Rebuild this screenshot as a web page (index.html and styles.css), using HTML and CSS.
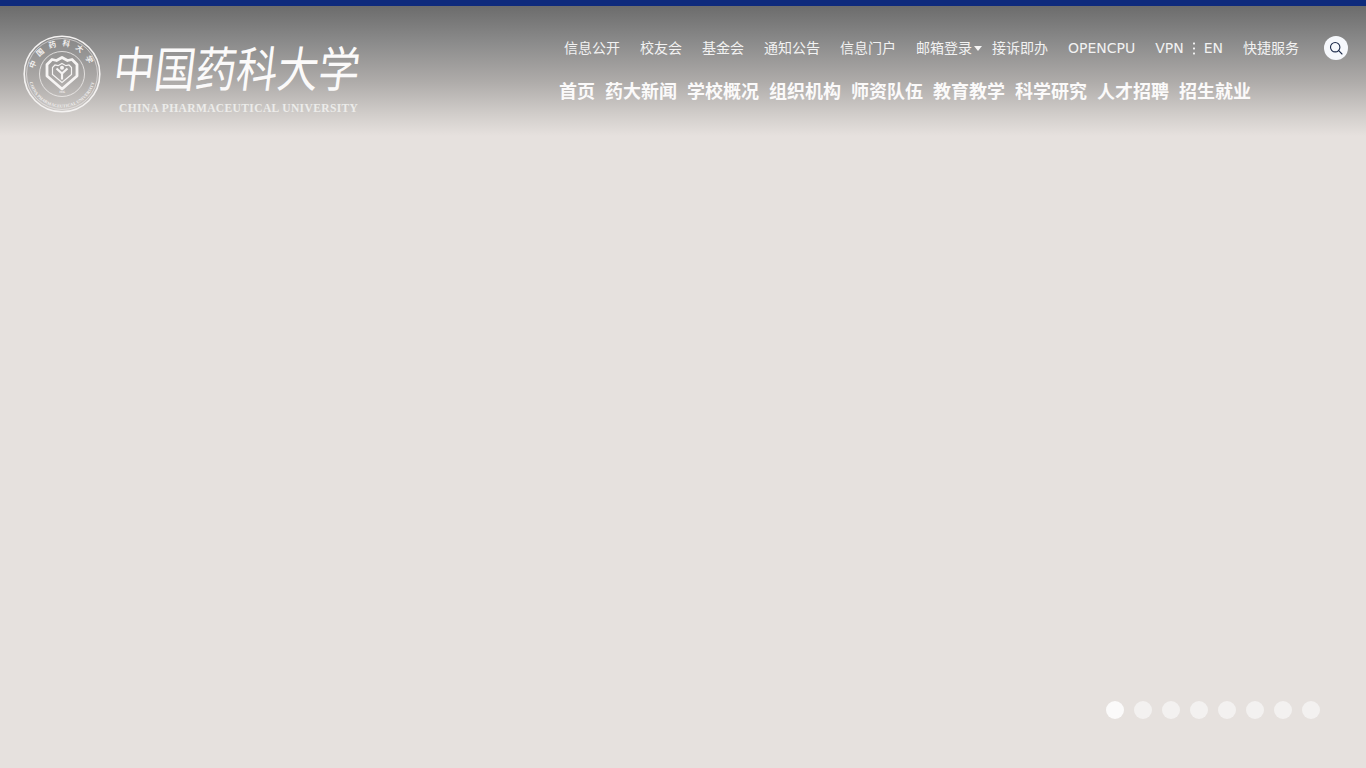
FILE: index.html
```html
<!DOCTYPE html>
<html lang="zh-CN">
<head>
<meta charset="utf-8">
<title>中国药科大学</title>
<link rel="stylesheet" href="styles.css">
</head>
<body>
<div class="accent"></div>
<main class="banner">
  <header class="header">
    <a class="logo" href="#">
      <svg class="seal" width="78" height="78" viewBox="0 0 78 78" fill="none">
        <defs>
          <path id="arcTop" d="M11 39a28 28 0 0 1 56 0"/>
          <path id="arcBottom" d="M5.500 39a33.500 33.500 0 0 0 67 0"/>
          <path id="arcYear" d="M20 39a19 19 0 0 0 38 0"/>
        </defs>
        <circle cx="39" cy="39" r="37.800" stroke="#f4f2f1" stroke-width="1.600"/>
        <circle cx="39" cy="39" r="35.500" stroke="#f1efee" stroke-width=".6"/>
        <circle cx="39" cy="39" r="22.500" stroke="#f1efee" stroke-width=".8"/>
        <text class="seal-cn"><textPath href="#arcTop" startOffset="50%" text-anchor="middle">中国药科大学</textPath></text>
        <text class="seal-en"><textPath href="#arcBottom" startOffset="50%" text-anchor="middle">CHINA PHARMACEUTICAL UNIVERSITY</textPath></text>
        <text class="seal-year"><textPath href="#arcYear" startOffset="50%" text-anchor="middle">1936</textPath></text>
        <path d="M39 22.500l5.500 3 4.500-1 5 5v11.500L39 54 24 41V29.500l5-5 4.500 1z" stroke="#f6f4f3" stroke-width="2.800" stroke-linejoin="round"/>
        <path d="M39 28.500l4 2.200 3-.7 2.500 2.500v7L39 47.500l-9.500-8v-7l2.500-2.500 3 .7z" stroke="#f6f4f3" stroke-width="1.200"/>
        <circle cx="39" cy="32.800" r="2" fill="#f6f4f3"/>
        <path d="M33.500 33.500L39 38.500l5.500-5M39 38.500v6" stroke="#f6f4f3" stroke-width="2.200"/>
      </svg>
      <div class="wordmark">
        <div class="wordmark-cn"><span>中</span><span>国</span><span>药</span><span>科</span><span>大</span><span>学</span></div>
        <div class="wordmark-en">CHINA PHARMACEUTICAL UNIVERSITY</div>
      </div>
    </a>
    <nav class="navs">
      <div class="top-nav">
        <a href="#">信息公开</a>
        <a href="#">校友会</a>
        <a href="#">基金会</a>
        <a href="#">通知公告</a>
        <a href="#">信息门户</a>
        <a class="has-menu" href="#">邮箱登录<i class="caret"></i></a>
        <a href="#">接诉即办</a>
        <a href="#">OPENCPU</a>
        <span class="lang"><a href="#">VPN</a><i class="dots"></i><a href="#">EN</a></span>
        <a href="#">快捷服务</a>
        <button class="search" type="button" aria-label="搜索">
          <svg width="14" height="14" viewBox="0 0 14 14" fill="none" stroke="#1c2a4a" stroke-width="1.100"><circle cx="6.200" cy="6.200" r="4.700"/><path d="M9.700 9.700l3.300 3.300" stroke-linecap="round"/></svg>
        </button>
      </div>
      <div class="main-nav">
        <a href="#">首页</a>
        <a href="#">药大新闻</a>
        <a href="#">学校概况</a>
        <a href="#">组织机构</a>
        <a href="#">师资队伍</a>
        <a href="#">教育教学</a>
        <a href="#">科学研究</a>
        <a href="#">人才招聘</a>
        <a href="#">招生就业</a>
      </div>
    </nav>
  </header>
  <div class="pager">
    <span class="dot active"></span><span class="dot"></span><span class="dot"></span><span class="dot"></span><span class="dot"></span><span class="dot"></span><span class="dot"></span><span class="dot"></span>
  </div>
</main>
</body>
</html>
```

FILE: styles.css
```css
* { box-sizing: border-box; }
html, body { margin: 0; height: 100%; overflow: hidden; }
body {
  background: #e6e1de;
  font-family: "DejaVu Sans", "Noto Sans CJK SC", sans-serif;
  color: #fff;
}
a { color: inherit; text-decoration: none; }
.accent { height: 6px; background: #0e2a7c; }
.banner { position: relative; height: 762px; background: #e6e1de; }
.header {
  display: flex;
  justify-content: space-between;
  height: 130px;
  padding: 0 18px 0 23px;
  background: linear-gradient(180deg, #6c6c6c 0%, #8b8b8b 28%, #aeaba9 58%, #d2cecb 84%, #e6e1de 100%);
}
.logo { display: flex; align-items: flex-start; gap: 16px; width: 536px; padding-top: 29px; }
.seal { flex: none; }
.seal-cn { font: 700 7.500px "Noto Sans CJK SC", sans-serif; fill: #f1efee; letter-spacing: 5.500px; }
.seal-en { font: 700 4.300px "Liberation Serif", serif; fill: #f1efee; letter-spacing: .1px; }
.seal-year { font: 700 3.200px "Liberation Serif", serif; fill: #f1efee; }
.wordmark { display: flex; flex-direction: column; margin-top: 2px; }
.wordmark-cn {
  display: flex;
  width: 246px;
  margin-left: -3px;
  height: 62px;
  font: 400 41px/58px "Noto Sans CJK SC", sans-serif;
  color: #fbfafa;
  transform: skewX(-7deg) scaleY(1.18);
}
.wordmark-en {
  margin-top: 2px;
  margin-left: 2px;
  width: 240px;
  font: 700 11.500px/14px "Liberation Serif", serif;
  letter-spacing: .38px;
  white-space: nowrap;
  color: #ececea;
}
.navs { display: flex; flex-direction: column; width: 789px; }
.top-nav {
  display: flex;
  align-items: center;
  gap: 20px;
  height: 24px;
  margin-top: 30px;
  padding-left: 5px;
  font-size: 14px;
  line-height: 24px;
  color: #f2f2f2;
  white-space: nowrap;
}
.has-menu { position: relative; }
.caret {
  position: absolute;
  left: 58px;
  top: 10px;
  border: 4px solid transparent;
  border-top: 5px solid #f5f5f5;
  border-bottom: 0;
}
.lang { display: flex; align-items: center; }
.dots {
  width: 2px;
  height: 14px;
  margin: 0 9px;
  background: radial-gradient(circle, #f2f2f2 1px, transparent 1.200px) 0 0 / 2px 5px repeat-y;
}
.search {
  display: flex;
  align-items: center;
  justify-content: center;
  width: 24px;
  height: 24px;
  margin-left: 5px;
  padding: 0;
  border: 0;
  border-radius: 50%;
  background: #f6f8fc;
}
.main-nav {
  display: flex;
  gap: 10px;
  margin-top: 19px;
  font-size: 18px;
  font-weight: 700;
  line-height: 26px;
  white-space: nowrap;
  color: #fbfafa;
}
.pager { position: absolute; right: 46px; top: 695px; display: flex; gap: 10px; }
.dot { width: 18px; height: 18px; border-radius: 50%; background: #f3f1f0; }
.dot.active { background: #fbfafa; }
```
